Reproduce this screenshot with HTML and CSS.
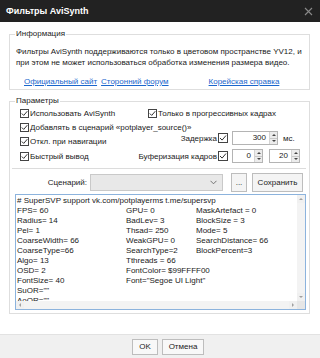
FILE: index.html
```html
<!DOCTYPE html>
<html lang="ru">
<head>
<meta charset="utf-8">
<title>Фильтры AviSynth</title>
<link rel="stylesheet" href="styles.css">
</head>
<body>
<div class="dialog">
  <div class="titlebar">
    <span class="title">Фильтры AviSynth</span>
    <svg class="close" width="9" height="9" viewBox="0 0 9 9"><path d="M1 1L8 8M8 1L1 8" stroke="#8a8a8a" stroke-width="1.1"/></svg>
  </div>
  <div class="content">
    <fieldset class="group info">
      <legend>Информация</legend>
      <p class="info-text">Фильтры AviSynth поддерживаются только в цветовом пространстве YV12, и<br>при этом не может использоваться обработка изменения размера видео.</p>
      <div class="links">
        <a class="link">Официальный сайт</a>
        <a class="link">Сторонний форум</a>
        <a class="link link-kr">Корейская справка</a>
      </div>
    </fieldset>

    <fieldset class="group params">
      <legend>Параметры</legend>
      <div class="row row-a">
        <label class="check left-col"><svg class="cb" width="9" height="9" viewBox="0 0 9 9"><rect x="0.5" y="0.5" width="8" height="8" fill="#fff" stroke="#444"/><path d="M1.8 4.5L3.7 6.4L7.3 2.2" fill="none" stroke="#333" stroke-width="1"/></svg>Использовать AviSynth</label>
        <label class="check"><svg class="cb" width="9" height="9" viewBox="0 0 9 9"><rect x="0.5" y="0.5" width="8" height="8" fill="#fff" stroke="#444"/><path d="M1.8 4.5L3.7 6.4L7.3 2.2" fill="none" stroke="#333" stroke-width="1"/></svg>Только в прогрессивных кадрах</label>
      </div>
      <div class="row row-b">
        <label class="check"><svg class="cb" width="9" height="9" viewBox="0 0 9 9"><rect x="0.5" y="0.5" width="8" height="8" fill="#fff" stroke="#444"/><path d="M1.8 4.5L3.7 6.4L7.3 2.2" fill="none" stroke="#333" stroke-width="1"/></svg>Добавлять в сценарий «potplayer_source()»</label>
      </div>
      <div class="row row-c">
        <label class="check left-col"><svg class="cb" width="9" height="9" viewBox="0 0 9 9"><rect x="0.5" y="0.5" width="8" height="8" fill="#fff" stroke="#444"/><path d="M1.8 4.5L3.7 6.4L7.3 2.2" fill="none" stroke="#333" stroke-width="1"/></svg>Откл. при навигации</label>
        <div class="cluster cluster-up">
          <span class="cl-label">Задержка</span>
          <svg class="cb cb-r" width="10" height="10" viewBox="0 0 10 10"><rect x="0.5" y="0.5" width="9" height="9" fill="#fff" stroke="#444"/><path d="M2 5L4.1 7.1L8 2.5" fill="none" stroke="#333" stroke-width="1"/></svg>
          <div class="spin spin-wide"><span class="spin-val">300</span><span class="spin-btns"><span class="up"></span><span class="down"></span></span></div>
          <span class="unit">мс.</span>
        </div>
      </div>
      <div class="row row-d">
        <label class="check left-col"><svg class="cb" width="9" height="9" viewBox="0 0 9 9"><rect x="0.5" y="0.5" width="8" height="8" fill="#fff" stroke="#444"/><path d="M1.8 4.5L3.7 6.4L7.3 2.2" fill="none" stroke="#333" stroke-width="1"/></svg>Быстрый вывод</label>
        <div class="cluster">
          <span class="cl-label">Буферизация кадров</span>
          <svg class="cb cb-r" width="10" height="10" viewBox="0 0 10 10"><rect x="0.5" y="0.5" width="9" height="9" fill="#fff" stroke="#444"/><path d="M2 5L4.1 7.1L8 2.5" fill="none" stroke="#333" stroke-width="1"/></svg>
          <div class="spin spin-narrow"><span class="spin-val">0</span><span class="spin-btns"><span class="up"></span><span class="down"></span></span></div>
          <div class="spin spin-narrow"><span class="spin-val">20</span><span class="spin-btns"><span class="up"></span><span class="down"></span></span></div>
        </div>
      </div>
      <div class="sep"></div>
      <div class="row script-row">
        <span class="script-label">Сценарий:</span>
        <div class="combo"><svg width="7" height="5" viewBox="0 0 7 5"><path d="M0.5 0.8L3.5 3.8L6.5 0.8" fill="none" stroke="#666" stroke-width="0.9"/></svg></div>
        <button class="btn btn-dots">...</button>
        <button class="btn btn-save">Сохранить</button>
      </div>
      <div class="editor">
        <div class="editor-main">
          <div class="code">
            <div class="code-line"># SuperSVP support vk.com/potplayerms t.me/supersvp</div>
            <div class="code-grid">
              <span>FPS= 60</span><span>GPU= 0</span><span>MaskArtefact = 0</span>
              <span>Radius= 14</span><span>BadLev= 3</span><span>BlockSize = 3</span>
              <span>Pel= 1</span><span>Thsad= 250</span><span>Mode= 5</span>
              <span>CoarseWidth= 66</span><span>WeakGPU= 0</span><span>SearchDistance= 66</span>
              <span>CoarseType=66</span><span>SearchType=2</span><span>BlockPercent=3</span>
              <span>Algo= 13</span><span>Tthreads = 66</span><span></span>
              <span>OSD= 2</span><span>FontColor= $99FFFF00</span><span></span>
              <span>FontSize= 40</span><span>Font="Segoe UI Light"</span><span></span>
              <span>SuOR=""</span><span></span><span></span>
              <span>AoOR=""</span><span></span><span></span>
            </div>
          </div>
          <div class="vscroll">
            <span class="arr arr-up"></span>
            <span class="vtrack"></span>
            <span class="arr arr-down"></span>
          </div>
        </div>
        <div class="hscroll">
          <span class="arr arr-left"></span>
          <span class="htrack"></span>
          <span class="arr arr-right"></span>
          <span class="corner"></span>
        </div>
      </div>
    </fieldset>
  </div>
  <div class="footer">
    <button class="btn btn-ok">OK</button>
    <button class="btn btn-cancel">Отмена</button>
  </div>
</div>
</body>
</html>
```

FILE: styles.css
```css
* { box-sizing: border-box; }
html, body { margin: 0; padding: 0; }
body {
  width: 320px;
  height: 358px;
  overflow: hidden;
  background: #ffffff;
  font-family: "Liberation Sans", Arial, sans-serif;
  font-size: 8px;
  color: #1a1a1a;
}
.dialog { width: 320px; height: 358px; display: flex; flex-direction: column; }
.titlebar {
  height: 22px;
  background: #222222;
  color: #fff;
  display: flex;
  align-items: center;
  justify-content: space-between;
  padding: 0 7px 0 6px;
  flex: none;
}
.title { font-weight: bold; font-size: 9px; }
.close { display: block; }

.content { flex: 1; padding: 7px 10px 0 9px; display: flex; flex-direction: column; gap: 6px; }

.group {
  margin: 0;
  border: 1px solid #dedede;
  padding: 0;
  min-width: 0;
}
.group legend {
  margin-left: 5px;
  padding: 0 1px;
  line-height: 10px;
  color: #222;
}
.info { height: 61px; flex: none; }
.info-text { margin: 7px 0 0 6px; line-height: 11px; white-space: nowrap; }
.links { display: flex; margin: 9px 0 0 14px; line-height: 10px; white-space: nowrap; }
.link { color: #1a66cc; text-decoration: underline; margin-right: 4px; }
.link-kr { margin-left: 36px; }

.params { flex: none; padding-bottom: 3px; }
.row { display: flex; align-items: center; padding-left: 10px; }
.check { display: flex; align-items: center; white-space: nowrap; }
.cb { display: block; margin-right: 1px; flex: none; }
.left-col { width: 128px; flex: none; }
.row-a { height: 14px; }
.row-b { height: 14px; }
.row-c { height: 14px; }
.row-d { height: 16px; }
.cluster { display: flex; align-items: center; }
.cluster-up { margin-top: -6px; }
.cl-label { width: 69px; display: flex; justify-content: flex-end; white-space: nowrap; margin-right: 1px; }
.cb-r { margin-right: 4px; }
.spin {
  height: 14px;
  border: 1px solid #b4b4b4;
  background: #fff;
  display: flex;
  align-items: stretch;
  flex: none;
}
.spin-wide { width: 46px; }
.spin-narrow { width: 31px; margin-right: 6px; }
.spin-val { flex: 1; text-align: right; padding-right: 3px; line-height: 12px; }
.spin-btns { width: 8px; display: flex; flex-direction: column; border-left: 1px solid #d4d4d4; background: #ececec; }
.spin-btns span { flex: 1; display: flex; align-items: center; justify-content: center; }
.spin-btns .up { border-bottom: 1px solid #c8c8c8; }
.spin-btns .up::before { content: ""; border: 2px solid transparent; border-bottom: 2px solid #444; border-top: 0; }
.spin-btns .down::before { content: ""; border: 2px solid transparent; border-top: 2px solid #444; border-bottom: 0; }
.unit { margin-left: 5px; }

.sep { height: 1px; background: #dcdcdc; margin: 4px 3px 4px 2px; }
.script-row { height: 19px; }
.script-label { width: 67px; text-align: right; margin-right: 3px; flex: none; }
.combo {
  width: 133px; height: 17px;
  border: 1px solid #c9c9c9; background: #e8e8e8;
  display: flex; align-items: center; justify-content: flex-end; padding-right: 5px;
}
.btn {
  font-family: inherit; font-size: 8px; color: #222;
  background: #f4f4f4; border: 1px solid #bdbdbd;
  padding: 0; margin: 0; line-height: 1;
}
.btn-dots { width: 16px; height: 19px; margin-left: 8px; }
.btn-save { width: 51px; height: 19px; margin-left: 5px; }

.editor {
  margin: 2px 3px 0 5px;
  height: 116px;
  border: 1px solid #8cb3dd;
  display: flex; flex-direction: column;
}
.editor-main { flex: 1; display: flex; min-height: 0; }
.code { flex: 1; overflow: hidden; padding: 1px 0 0 1px; line-height: 10px; white-space: nowrap; }
.code-grid { display: grid; grid-template-columns: 109px 70px 1fr; }
.vscroll { width: 8px; display: flex; flex-direction: column; background: #f3f3f3; }
.vtrack { flex: 1; }
.arr { height: 8px; width: 8px; display: flex; align-items: center; justify-content: center; background: #f0f0f0; }
.arr-up::before { content: ""; border: 2px solid transparent; border-bottom: 2px solid #a0a0a0; border-top: 0; }
.arr-down::before { content: ""; border: 2px solid transparent; border-top: 2px solid #a0a0a0; border-bottom: 0; }
.arr-left::before { content: ""; border: 2px solid transparent; border-right: 2px solid #a0a0a0; border-left: 0; }
.arr-right::before { content: ""; border: 2px solid transparent; border-left: 2px solid #a0a0a0; border-right: 0; }
.hscroll { height: 8px; display: flex; background: #f3f3f3; }
.htrack { flex: 1; }
.corner { width: 8px; background: #e6e6e6; }

.footer {
  height: 24px;
  flex: none;
  background: #f0f0f0;
  border-top: 1px solid #e2e2e2;
  display: flex; align-items: center; justify-content: center;
  padding-left: 16px; gap: 4px;
}
.btn-ok { width: 26px; height: 16px; background: #f8f8f8; }
.btn-cancel { width: 42px; height: 16px; background: #f8f8f8; }
```
